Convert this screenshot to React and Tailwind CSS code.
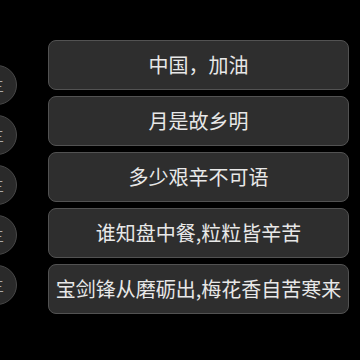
import React from 'react';

const LINES = [
    '中国，加油',
    '月是故乡明',
    '多少艰辛不可语',
    '谁知盘中餐,粒粒皆辛苦',
    '宝剑锋从磨砺出,梅花香自苦寒来',
];

const SIDE = ['三', '三', '三', '三', '三'];

const App = () => (
    <div
        className="relative w-[360px] h-[360px] bg-black overflow-hidden"
        style={{ fontFamily: '"Noto Sans CJK SC", "Noto Sans", sans-serif' }}
    >
        {/* side circles, cut off by the left edge */}
        <div className="absolute left-[-23px] top-[65px] flex flex-col gap-[10px]">
            {SIDE.map((s, i) => (
                <div
                    key={i}
                    className="w-10 h-10 rounded-full bg-[#2a2a2a] border border-[#484848] flex items-center justify-center text-[14px] text-[#a8a8a8]"
                >
                    {s}
                </div>
            ))}
        </div>

        {/* buttons */}
        <div className="pt-[40px] pl-[48px] flex flex-col gap-[6px]">
            {LINES.map(line => (
                <button
                    key={line}
                    className="w-[301px] h-[50px] rounded-lg bg-[#2e2e2e] border border-[#525252] text-[20px] leading-none text-[#e8e8e8] flex items-center justify-center whitespace-nowrap"
                >
                    {line}
                </button>
            ))}
        </div>
    </div>
);

export default App;
